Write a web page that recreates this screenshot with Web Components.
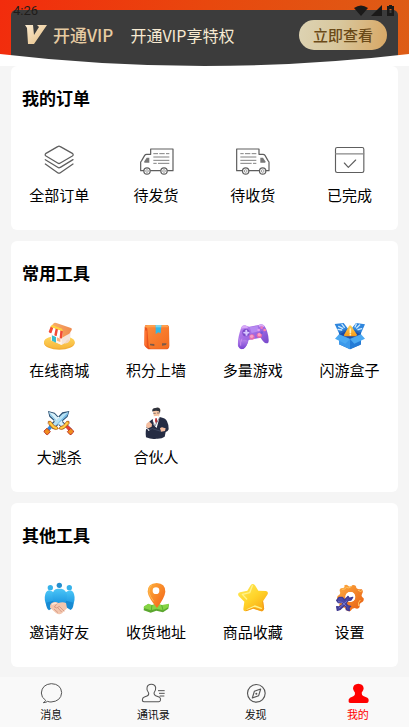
<!DOCTYPE html>
<html lang="zh-CN">
<head>
<meta charset="utf-8">
<meta name="viewport" content="width=device-width, initial-scale=1">
<title>我的</title>
<style>
  html { background: #f5f5f5; }
  body {
    margin: 0;
    color: #000;
    font-family: "Noto Sans CJK SC", "Noto Sans", sans-serif;
  }
</style>
</head>
<body>
<profile-page>
  <vip-header slot="header" time="4:26"></vip-header>

  <menu-card heading="我的订单">
    <menu-entry icon="layers">全部订单</menu-entry>
    <menu-entry icon="truck-left">待发货</menu-entry>
    <menu-entry icon="truck-right">待收货</menu-entry>
    <menu-entry icon="done">已完成</menu-entry>
  </menu-card>

  <menu-card heading="常用工具">
    <menu-entry icon="shop">在线商城</menu-entry>
    <menu-entry icon="parcel">积分上墙</menu-entry>
    <menu-entry icon="gamepad">多量游戏</menu-entry>
    <menu-entry icon="openbox">闪游盒子</menu-entry>
    <menu-entry icon="swords">大逃杀</menu-entry>
    <menu-entry icon="partner">合伙人</menu-entry>
  </menu-card>

  <menu-card heading="其他工具">
    <menu-entry icon="friends">邀请好友</menu-entry>
    <menu-entry icon="pin">收货地址</menu-entry>
    <menu-entry icon="star">商品收藏</menu-entry>
    <menu-entry icon="settings">设置</menu-entry>
  </menu-card>

  <tab-bar slot="footer">
    <tab-link icon="chat" href="#messages">消息</tab-link>
    <tab-link icon="contacts" href="#contacts">通讯录</tab-link>
    <tab-link icon="compass" href="#discover">发现</tab-link>
    <tab-link icon="me" href="#me" active>我的</tab-link>
  </tab-bar>
</profile-page>

<script>
const TRUCK = `
  <g fill="none" stroke="#5e5e5e" stroke-width="3.6" stroke-linejoin="round" stroke-linecap="round">
    <path d="M431 272h-9v-26l3-4 9-16q2-3 6-3h12v-16h67v65h-16M481 272h-29"/>
    <circle cx="441" cy="273" r="9.5"/><circle cx="492" cy="273" r="9.5"/>
  </g>
  <g fill="none" stroke="#777" stroke-width="2"><circle cx="441" cy="273" r="4"/><circle cx="492" cy="273" r="4"/></g>
  <path d="M433 248v-4l7-11h8v15z" fill="#777"/>
  <path d="M460 221h14m4 0h16m4 0h10M460 231h48M460 241h48M460 250h10m4 0h34" fill="none" stroke="#777" stroke-width="2.8"/>`;

const ICONS = {
  layers: ["130 192 96 96", `
    <g fill="none" stroke="#5e5e5e" stroke-width="3.8" stroke-linejoin="round" stroke-linecap="round">
      <path d="M174 200q4-3 8 0l36 20q5 4 0 8l-36 21q-4 3-8 0l-35-21q-5-4 0-8z"/>
      <path d="M137 239l37 23q4 3 8 0l38-23M137 252l37 26q4 3 8 0l38-26"/>
    </g>`],
  "truck-left": ["420 192 96 96", TRUCK],
  "truck-right": ["420 192 96 96", `<g transform="translate(938 0) scale(-1 1)">${TRUCK}</g>`],
  done: ["387 192 96 96", `
    <g fill="none" stroke="#5e5e5e" stroke-width="3.4" stroke-linejoin="round" stroke-linecap="round">
      <rect x="391.500" y="202.500" width="85" height="75" rx="5"/>
      <path d="M392 221.500h84" stroke-width="4" stroke="#888"/>
      <path d="M418 249l12 13 22-22"/>
    </g>`],
  shop: ["39 27 96 96", `
    <defs>
      <linearGradient id="a" x2="0" y2="1"><stop stop-color="#ffd95e"/><stop offset="1" stop-color="#f7b63c"/></linearGradient>
      <linearGradient id="b"><stop stop-color="#f9b16c"/><stop offset="1" stop-color="#ef8a4e"/></linearGradient>
    </defs>
    <ellipse cx="88" cy="99" rx="46" ry="20" fill="#f3ad35"/>
    <ellipse cx="88" cy="96" rx="46" ry="19" fill="url(#a)"/>
    <path d="M64 71l33 12 25-18-2 26-25 14-33-14z" fill="#f5e5dc"/>
    <path d="M64 71l31 12v22l-31-14z" fill="#fff6ee"/>
    <path d="M66 76l12 5v17l-12-6z" fill="#38bccc"/><path d="M81 82l10 4v10l-10-4z" fill="#ffb57e"/>
    <path d="M72 39q3-2 7 0l44 15q4 2 2 6l-7 11-20 11-38-30z" fill="url(#b)"/>
    <path d="M62 50l37 14-3 21q-5 3-7-2-5 3-8-4-5 3-8-3-5 2-7-4-6 1-10-5z" fill="#fff"/>
    <path d="M62 50l8 3-6 17q-5 0-8-5zM77 55l7 3-4 20q-5 1-7-3zM91 61l8 3-3 21q-4 2-7-2z" fill="#f24b35"/>
    <path d="M66 45l30 11 3 8-37-14z" fill="#ffd33d"/>
    <path d="M110 91q7-5 9 1l-5 6-10 3z" fill="#f4d7c2"/>`],
  parcel: ["330 27 96 96", `
    <defs><linearGradient id="a" x2="1" y2="1"><stop stop-color="#ff8c3c"/><stop offset="1" stop-color="#f26b1f"/></linearGradient></defs>
    <path d="M350 45h58q8 0 9 7l1 55q0 11-11 11h-52q-12-9-12-13l1-53q0-7 6-7z" fill="#e9531c"/>
    <path d="M351 45h57q8 0 9 7v54q0 10-9 10h-42q-10 0-10-9l-4-50q0-6-8-5 1-7 7-7z" fill="url(#a)"/>
    <path d="M347 47q5-3 12-2h48q7 0 9 7h-58q-8 1-14-1z" fill="#ffa04d"/>
    <path d="M377 45h17l-2 25-7-3-8 6z" fill="#35b8e7"/><path d="M377 45h17v7h-17z" fill="#7bd6ef"/>
    <path d="M360 101l13 1v6l-13-2zM396 100h14l-2 5-12 2z" fill="#7c5948"/>
    <path d="M344 61v43l6 6V62z" fill="#ff7632"/>`],
  gamepad: ["36 27 96 96", `
    <defs>
      <linearGradient id="a" x2="1" y2="1"><stop stop-color="#bf83f1"/><stop offset=".55" stop-color="#9864df"/><stop offset="1" stop-color="#6a3ec2"/></linearGradient>
      <linearGradient id="b" x2="0" y2="1"><stop stop-color="#c291ee"/><stop offset="1" stop-color="#7842d2"/></linearGradient>
    </defs>
    <path d="M48 55q2-9 12-9l12 4 29-5q11-6 18 4 10 15 12 40 1 12-7 11-8-1-17-17l-36 7q-5 20-15 26-12 5-17-8-2-22 9-53z" fill="url(#a)"/>
    <path d="M42 83q4 10 12 7 10-3 15 4-4 17-13 22-12 4-16-8z" fill="url(#b)"/>
    <path d="M49 53q3-7 10-7l11 4-3 4q-10-1-18 2zM101 45q10-6 17 2l-1 4q-8-3-15-1z" fill="#d8aaf7"/>
    <path d="M74 52l24-4 3 16-21 5z" fill="#b68af1"/>
    <circle cx="63" cy="68" r="11" fill="#7c4bc9"/><path d="M61 60l5-1 1 6 6 1v4l-5 1-1 6h-5l-1-6-6-1v-4l6-1z" fill="#d7c7ff"/>
    <circle cx="81" cy="81" r="8" fill="#e86caf"/><circle cx="80" cy="79" r="5" fill="#f7a0c6"/>
    <circle cx="103" cy="76" r="8" fill="#e66bac"/><circle cx="103" cy="74" r="5" fill="#ff9fc4"/>
    <circle cx="110" cy="53" r="4" fill="#ef77bd"/><circle cx="119" cy="60" r="4" fill="#ff83a9"/><circle cx="110" cy="68" r="4" fill="#7459dc"/><circle cx="101" cy="60" r="4" fill="#e09cf4"/>
    <path d="M51 86q-6 12-4 21" fill="none" stroke="#cb8eee" stroke-width="3"/>`],
  openbox: ["327 27 96 96", `
    <defs><linearGradient id="a" x2="0" y2="1"><stop stop-color="#ffd154"/><stop offset="1" stop-color="#f59817"/></linearGradient></defs>
    <path d="M329 42l27-3 18 24-30 11zM420 43l-27-4-19 24 32 11z" fill="#2f86dd"/>
    <path d="M342 67l32-14 34 14-1 37-32 14-33-15z" fill="#2367bd"/>
    <path d="M342 74l33 14v30l-33-15z" fill="#3d9aeb"/><path d="M375 88l33-13v28l-33 15z" fill="#247bd6"/>
    <path d="M342 73l-12 13 31 15 14-14zM408 73l12 13-32 15-13-14z" fill="#4ba9f2"/>
    <path d="M345 73l29-16 31 16-30 12z" fill="#1b4ba6"/>
    <path d="M372 48q3-5 7 0l16 25q2 6-4 6h-29q-7 0-4-6z" fill="url(#a)"/>
    <path d="M376 57v11" stroke="#fff2c2" stroke-width="5" stroke-linecap="round"/><circle cx="376" cy="74" r="2.700" fill="#fff2c2"/>
    <path d="M351 43l7 9M341 49l12 6M339 58l11 2M394 42l-4 9M404 45l-9 9M410 56l-11 3" stroke="#cceaff" stroke-width="4" stroke-linecap="round"/>`],
  swords: ["39 33 96 96", `
    <path d="M54 48l20 5 38 40-12 10-42-38zM118 48l-21 4-40 41 13 10 43-38z" fill="#294f72"/>
    <path d="M57 51l16 5 34 36-8 7-38-37z" fill="#d8f1fa"/><path d="M57 51l42 48-38-37z" fill="#8fc9ea"/>
    <path d="M115 51l-17 5-36 37 8 6 41-37z" fill="#b6e2f5"/><path d="M115 51L70 99l41-37z" fill="#72b8e4"/>
    <path d="M71 91l-14 17-7-7 13-14zM103 91l15 17 7-7-14-14z" fill="#31518d"/>
    <path d="M68 94l-12 14-5-6 12-12z" fill="#328ce3" stroke="#328ce3" stroke-width="3"/><path d="M105 94l13 14 6-6-13-12z" fill="#e64031" stroke="#e64031" stroke-width="3"/>
    <path d="M55 79q8-3 11 5l7 8q10 1 12 9-9 6-18-2l-8-8q-7-5-4-12zM117 79q-8-3-11 5l-7 8q-10 1-12 9 9 6 17-2l9-8q7-5 4-12z" fill="#f29a1c" stroke="#a8571c" stroke-width="2"/>
    <path d="M59 82l12 14 10 4M113 82l-12 14-10 4" fill="none" stroke="#ffd14b" stroke-width="5"/>
    <path d="M42 108l9-8 10 10-8 9q-6 0-7-5-4-1-4-6zM131 108l-9-8-10 10 8 9q6 0 7-5 4-1 4-6z" fill="#ef8d1d" stroke="#c23a2b" stroke-width="3"/>`],
  partner: ["330 33 96 96", `
    <path d="M369 49q0-11 9-9 11-5 13 5l-2 12-3 10-14-2z" fill="#f6c5a3"/>
    <path d="M367 50q-2-11 9-11 12-4 15 5l-1 11-3-6q-9-3-18 0z" fill="#30333c"/>
    <path d="M370 55h7m4-1h7" stroke="#645a60" stroke-width="2.400"/>
    <path d="M371 64l14-2 4 10-6 15-11-8z" fill="#fff"/><path d="M376 70l4-1 2 10-4 7-3-8z" fill="#bd3035"/>
    <path d="M389 66q18 3 22 13 6 12 5 24-2 7-9 8l-3 14q-9 7-25 6-13 3-31-4-3-20 3-34 4-13 17-21l3 18 9 9z" fill="#252c43"/>
    <path d="M348 93q0-9 7-11 6-3 7 2l4 3-1 8-10 5q-6-1-7-7zM390 100q5-6 11-2l6 2-2 8-12 2z" fill="#f5bea0"/>
    <path d="M356 105l11-4 26 8M366 76l9 17 12-23" fill="none" stroke="#4c566f" stroke-width="2"/>
    <path d="M347 99l8 4 2 5" fill="none" stroke="#fff" stroke-width="3"/>`],
  friends: ["39 18 96 96", `
    <defs><linearGradient id="a" x2="0" y2="1"><stop stop-color="#4bc6f7"/><stop offset="1" stop-color="#1993df"/></linearGradient></defs>
    <circle cx="61" cy="38" r="8" fill="#36b2ea"/><circle cx="118" cy="38" r="8" fill="#36b2ea"/><circle cx="88" cy="31" r="8" fill="#258fcf"/>
    <path d="M46 57q5-14 17-10l12 7-3 29-22 9q-9-18-4-35zM132 57q-5-14-17-10l-12 7 2 29 23 9q9-18 4-35z" fill="url(#a)"/>
    <path d="M67 61q2-19 16-20h11q14 2 17 20l-3 26-37 2z" fill="url(#a)"/>
    <path d="M49 83l20-6 8 16-20 13q-10-8-8-23zM130 83l-21-6-7 16 20 12q10-8 8-22z" fill="#188ad2"/>
    <path d="M65 84q12-6 20 0 13-5 23 0l3 16-15 15q-9 6-18-1l-18-16q-2-8 5-14z" fill="#f3c6ad"/>
    <path d="M81 86l-8 10q7 7 15-2l15 15M72 102l12 11M83 98l12 13" fill="none" stroke="#c88877" stroke-width="2"/>
    <path d="M66 88q9-5 14-2" fill="none" stroke="#ffe5d5" stroke-width="4"/>`],
  pin: ["330 18 96 96", `
    <defs><linearGradient id="a" x2="1" y2="1"><stop stop-color="#ffb03b"/><stop offset="1" stop-color="#f15f17"/></linearGradient></defs>
    <path d="M342 96l12-8 12 4 13-5 17 6 21-5-2 13-16 11-20-5-17 6-21-7z" fill="#5ba72f"/>
    <path d="M342 94l13-8 11 4 14-5 16 5 21-4-3 11-15 9-20-5-16 5-22-7z" fill="#85d444"/>
    <path d="M366 90l-2 15m31-15l4 15" stroke="#55af34" stroke-width="3"/>
    <path d="M353 50q0-25 27-26 26 1 26 26-1 16-25 49-27-33-28-49z" fill="url(#a)"/>
    <path d="M365 30q-10 8-8 23 2 10 14 26" fill="none" stroke="#ffb953" stroke-width="3"/>
    <circle cx="378" cy="47" r="10" fill="#fff"/>`],
  star: ["36 18 96 96", `
    <defs><linearGradient id="a" x2=".8" y2="1"><stop stop-color="#ffed5e"/><stop offset=".55" stop-color="#ffd329"/><stop offset="1" stop-color="#f9a914"/></linearGradient></defs>
    <path d="M77 31q6-8 13 0l10 16 23 1q9 3 4 11l-13 20 3 23q-2 10-11 6l-22-7-21 8q-9 1-8-8l3-21-17-17q-5-8 4-11l22-5z" fill="url(#a)"/>
    <path d="M82 32l-8 21-22 5 13 14M109 100l-20-7-22 11" fill="none" stroke="#fff28b" stroke-width="4" stroke-linecap="round" stroke-linejoin="round"/>
    <path d="M113 79l3 22q-2 8-9 5l-22-7-22 8" fill="none" stroke="#f39b19" stroke-width="3"/>`],
  settings: ["327 18 96 96", `
    <defs><linearGradient id="a" x2="1" y2="1"><stop stop-color="#ffae42"/><stop offset="1" stop-color="#e75b0f"/></linearGradient></defs>
    <path fill-rule="evenodd" d="M358 31q8-5 13 3 6 2 12-4 11-1 11 9 6 5 15 3 8 6 2 15-4 7 5 13 2 10-8 13-6 3-4 13-5 9-15 3-8 0-12 8-10 5-15-5-4-7-13-4-9-4-5-14 0-6-7-10-3-10 5-14 6-4 2-12-1-10 10-9 6 0 4-8zM375 51q-14 2-13 17 3 13 16 12 13-2 12-16-2-14-15-13z" fill="url(#a)"/>
    <path d="M351 43q9 1 13-6 7 5 16-3M399 45q8 8 12 2M406 75q-8 6-5 18" fill="none" stroke="#ffc561" stroke-width="3"/>
    <circle cx="376" cy="66" r="15" fill="#fff"/>
    <path d="M342 67l-7 9 5 7 10-1 5 5-13 9-7-1 2 11 9-3 13-12 5 5 0 8 9 3-1-9 5-4-9-2-5-7 6-9 9-1 5-8-10 3-4-6-10 11-7-8z" fill="#4c49a7" stroke="#403a91" stroke-width="4" stroke-linejoin="round"/>
    <path d="M339 80l13 2 12 12M342 99l25-21" fill="none" stroke="#7276ce" stroke-width="3"/>`],
  chat: ["117 66 72 72", `
    <path d="M137 121q-13-8-13-22 2-26 30-28 29 1 31 27-2 26-32 28-6 0-10-2-5 4-13 4 6-3 7-7z" fill="none" stroke="#555" stroke-width="3" stroke-linejoin="round"/>`],
  contacts: ["424 66 72 72", `
    <path d="M447 99q-7-8-5-16 2-10 13-10t13 10q1 8-5 16 0 6 5 8l12 5q4 3 2 10-1 3-5 3h-44q-5 0-5-5 0-7 6-9l8-3q6-2 5-9z" fill="none" stroke="#555" stroke-width="3.200" stroke-linejoin="round"/>
    <path d="M475 92h20M478 100h17M480 108h14" stroke="#555" stroke-width="3"/>`],
  compass: ["116 66 72 72", `
    <circle cx="153" cy="100" r="26.500" fill="none" stroke="#555" stroke-width="3.400"/>
    <path d="M166 87l-6 20-19 7 6-20z" fill="none" stroke="#555" stroke-width="3.400" stroke-linejoin="round"/>
    <circle cx="153" cy="101" r="3" fill="#555"/>`],
  me: ["423 66 72 72", `
    <path d="M450 98q-6-6-6-13 1-13 16-14 15 1 16 14 0 7-6 13 0 8 5 10l12 5q6 4 3 13-1 3-6 3h-47q-5 0-6-3-2-9 4-13l10-4q6-3 5-11z" fill="#f00"/>`]
};

customElements.define("line-icon", class extends HTMLElement {
  connectedCallback() {
    const [box, art] = ICONS[this.getAttribute("name")];
    this.attachShadow({ mode: "open" }).innerHTML = `
      <style>
        :host { display: block; width: 32px; height: 32px; }
        svg { display: block; width: 100%; height: 100%; overflow: visible; }
      </style>
      <svg viewBox="${box}" aria-hidden="true">${art}</svg>`;
  }
});

customElements.define("profile-page", class extends HTMLElement {
  constructor() {
    super();
    this.attachShadow({ mode: "open" }).innerHTML = `
      <style>
        :host { display: flex; flex-direction: column; min-height: 100vh; }
        main { flex: 1; display: flex; flex-direction: column; gap: 11px; padding: 0 11px 10px; }
        footer { position: sticky; bottom: 0; }
      </style>
      <header><slot name="header"></slot></header>
      <main><slot></slot></main>
      <footer><slot name="footer"></slot></footer>`;
  }
});

customElements.define("status-bar", class extends HTMLElement {
  connectedCallback() {
    this.attachShadow({ mode: "open" }).innerHTML = `
      <style>
        :host { display: flex; justify-content: space-between; align-items: center; height: 22px;
                padding: 0 13px; box-sizing: border-box; color: #1f1c1a;
                font: 400 13px/22px Roboto, sans-serif; }
        svg { display: block; width: 42px; height: 12px; }
      </style>
      <span>${this.getAttribute("time")}</span>
      <svg viewBox="0 0 42 12" fill="#1b1a19" aria-hidden="true">
        <path d="M0 3q7-5 14 0L7 11z"/>
        <path d="M28 0v11H17z"/>
        <path d="M35 1V0h3v1h2v10h-7V1zM35.500 4v4h2V4z" fill-rule="evenodd"/>
      </svg>`;
  }
});

customElements.define("vip-header", class extends HTMLElement {
  connectedCallback() {
    this.attachShadow({ mode: "open" }).innerHTML = `
      <style>
        :host { display: block; position: relative; padding: 10px 11px 0;
                background: linear-gradient(100deg, #f22c0d, #e8480e 50%, #dd5d16); }
        .banner { display: flex; align-items: center; height: 56px; box-sizing: border-box;
                  padding: 0 11px 7px 14px; border-radius: 5px 5px 0 0; background: #3c3c3c; }
        .logo { width: 22px; height: 20px; margin-right: 6px; }
        strong { font-weight: 500; font-size: 17px; line-height: 24px; color: #e6cba2; margin-right: 17px; }
        p { flex: 1; margin: 0; font-size: 16px; line-height: 24px; color: #f7ead2; white-space: nowrap; }
        button { height: 30px; padding: 0 14px; border: 0; border-radius: 15px;
                 background: linear-gradient(100deg, #ddd3b3, #d8c79d 45%, #d8a764);
                 color: #6b4a18; font: 500 15px/30px "Noto Sans CJK SC", sans-serif; white-space: nowrap; }
        .curve { position: absolute; left: 0; bottom: 0; width: 100%; height: 12px; }
        status-bar { position: absolute; top: 0; left: 0; right: 0; }
      </style>
      <div class="banner">
        <svg class="logo" viewBox="0 0 22 20" aria-hidden="true">
          <defs><linearGradient id="g" x2="1" y2="1"><stop stop-color="#fbebd0"/><stop offset="1" stop-color="#e5bd83"/></linearGradient></defs>
          <path d="M0 0h8l1 10 5-8-2-2h10L9 19H3L2 3z" fill="url(#g)"/>
        </svg>
        <strong>开通VIP</strong>
        <p>开通VIP享特权</p>
        <button type="button">立即查看</button>
      </div>
      <svg class="curve" viewBox="0 0 409 12" preserveAspectRatio="none" aria-hidden="true">
        <path d="M0 0Q204 24 409 0V12H0z" fill="#fff"/>
      </svg>
      <status-bar time="${this.getAttribute("time")}"></status-bar>`;
  }
});

customElements.define("menu-card", class extends HTMLElement {
  connectedCallback() {
    this.attachShadow({ mode: "open" }).innerHTML = `
      <style>
        :host { display: block; padding-bottom: 11px; border-radius: 6px; background: #fff; }
        h2 { margin: 0; padding: 21px 11px 23px; font-size: 17px; line-height: 22px; font-weight: 700; }
        .grid { display: grid; grid-template-columns: repeat(4, 1fr); }
      </style>
      <h2>${this.getAttribute("heading")}</h2>
      <div class="grid"><slot></slot></div>`;
  }
});

customElements.define("menu-entry", class extends HTMLElement {
  connectedCallback() {
    this.attachShadow({ mode: "open" }).innerHTML = `
      <style>
        :host { display: block; }
        button { display: flex; flex-direction: column; align-items: center; gap: 9px; width: 100%;
                 padding: 12px 0 14px; border: 0; background: none; color: inherit;
                 font: inherit; font-size: 15px; line-height: 20px; white-space: nowrap; }
      </style>
      <button type="button"><line-icon name="${this.getAttribute("icon")}"></line-icon><span><slot></slot></span></button>`;
  }
});

customElements.define("tab-bar", class extends HTMLElement {
  constructor() {
    super();
    this.attachShadow({ mode: "open" }).innerHTML = `
      <style>
        :host { display: block; background: #f9f9f9; }
        nav { display: grid; grid-template-columns: repeat(4, 1fr); }
      </style>
      <nav><slot></slot></nav>`;
  }
});

customElements.define("tab-link", class extends HTMLElement {
  connectedCallback() {
    this.attachShadow({ mode: "open" }).innerHTML = `
      <style>
        :host { display: block; color: #111; }
        :host([active]) { color: #f00; }
        a { display: flex; flex-direction: column; align-items: center; padding: 5px 0; color: inherit;
            font-size: 11px; line-height: 16px; text-decoration: none; }
        line-icon { width: 24px; height: 24px; }
      </style>
      <a href="${this.getAttribute("href")}"><line-icon name="${this.getAttribute("icon")}"></line-icon><span><slot></slot></span></a>`;
  }
});
</script>
</body>
</html>
